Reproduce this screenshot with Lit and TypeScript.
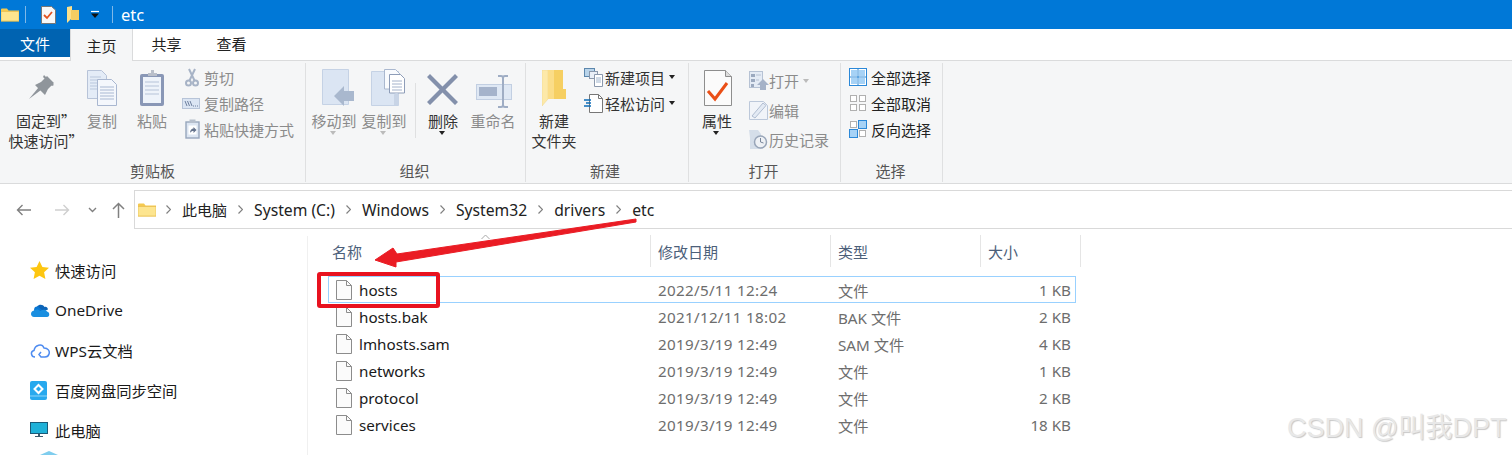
import { LitElement, html, css, svg } from "lit";
import { customElement } from "lit/decorators.js";

const pageIcon = html`<svg class="file-ico" width="18" height="22" viewBox="0 0 18 22"><path d="M1.500 1.500h10l5 5v14h-15z" fill="#fbfbfb" stroke="#8c8c8c"/><path d="M11.500 1.500v5h5" fill="none" stroke="#8c8c8c"/></svg>`;

const I = {
  folderSmall: svg`<path d="M0 2.500q0-1 1-1h5l1.500 2H18v11H0z" fill="#f5c94f"/><rect x="0" y="4.500" width="18" height="9.500" fill="#fde58f" stroke="#e5b84a" stroke-width=".6"/>`,
  pin: svg`<g fill="#8f959b"><path d="M0 25l9.500-11.500 2.500 2.500z"/><path d="M6 11l6-3 6-6 7 7-6 6-3 6z"/><path d="M15 1l10 10-2 1-9-9z"/></g>`,
  copy: svg`<path d="M.5.500h14l5 5v23H.5z" fill="#e4ecf7" stroke="#b7c3d8"/><g stroke="#b9c7dc"><path d="M3 7h11M3 10h11M3 13h8M3 16h8M3 19h8"/></g><path d="M10.500 9.500h14l5 5v21h-19z" fill="#f4f7fc" stroke="#a9b7d0"/><g stroke="#a9b8d2"><path d="M13 17h14M13 20h14M13 23h14M13 26h14M13 29h14"/></g>`,
  paste: svg`<rect x="1" y="5" width="24" height="32" rx="2" fill="#8997b6"/><rect x="4" y="8" width="18" height="26" fill="#eef3fa"/><g stroke="#b6c3d8"><path d="M6 13h14M6 17h14M6 21h14M6 25h14"/></g><path d="M9 7V4h3V1h3v3h3v3z" fill="#b9bfca"/>`,
  scissors: svg`<g fill="none" stroke="#a7b3c6" stroke-width="2"><circle cx="3.500" cy="15" r="2.500"/><circle cx="10.500" cy="15" r="2.500"/><path d="M4.500 12.500L10 1M9.500 12.500L4 1"/></g>`,
  path: svg`<rect x=".5" y=".5" width="17" height="10" fill="#dbe5f3" stroke="#b7c4d8"/><path d="M3 3l2 5M5.500 3l2 5M8 3l2 5" stroke="#6d7f9e"/><path d="M11 8h1M13 8h1M15 8h1" stroke="#6d7f9e"/>`,
  shortcut: svg`<rect x="1" y="3" width="13" height="16" fill="#dde6f2" stroke="#97a6bc" stroke-width="1.400"/><rect x="4.500" y=".5" width="6" height="3.500" fill="#b6bfcc"/><rect x="3.500" y="6.500" width="8" height="9" fill="#fff"/><path d="M5 14c0-3 1.500-4.500 3.500-4.500V8l3 3-3 3v-2c-1.500 0-2.500.5-3.500 2z" fill="#65738c"/>`,
  move: svg`<path d="M.5.500h26v35H.5z" fill="#dbe5f3" stroke="#c5d2e5"/><path d="M12 27l10-10v5h10v10H22v5z" fill="#a9b8ce"/>`,
  copyTo: svg`<path d="M.5 2.500h27v34H.5z" fill="#dbe5f3" stroke="#c5d2e5"/><path d="M13.500.500h11l5 5V20H13.500z" fill="#f9fbfe" stroke="#aab8cf"/><path d="M18.500 5.500h11l4 4V24h-15z" fill="#fff" stroke="#8e9db8"/><g stroke="#a4b2ca"><path d="M21 12h10M21 15h10M21 18h10M21 21h10"/></g><path d="M23 36V26q0-2 2.500-2t2.500 2v10z" fill="#c8d4e6"/>`,
  del: svg`<path d="M3 0l12.500 12.500L28 0l3 3-12.500 12.500L31 28l-3 3-12.500-12.500L3 31l-3-3 12.500-12.500L0 3z" fill="#8390ab"/>`,
  rename: svg`<rect x=".5" y="9.500" width="35" height="15" fill="#dfe8f4" stroke="#c2cfe2"/><rect x="3" y="12" width="18" height="9" fill="#a5b3cb"/><g fill="none" stroke="#9fadc4" stroke-width="2"><path d="M22 1h3q2 0 2 2v27q0 2-2 2h-3M32 1h-3q-2 0-2 2v27q0 2 2 2h3"/></g>`,
  newFolder: svg`<path d="M0 0h6v29l-6 7z" fill="#fde9a9" stroke="#eed48a" stroke-width=".5"/><path d="M6 0h15v19h3v10H6z" fill="#f6cf62"/><path d="M6 0h6v29H6z" fill="#fbdd88"/>`,
  newItem: svg`<rect x=".5" y=".5" width="10" height="8" fill="#b9d4ea" stroke="#5c87ad"/><rect x="5.500" y="3.500" width="8" height="7" fill="#e9eff7" stroke="#8a98ac"/><path d="M10.500 6.500h8v12h-8z" fill="#fff" stroke="#8a98ac"/><path d="M12 10h5M12 12h5M12 14h5" stroke="#9fb4cd"/>`,
  easy: svg`<path d="M5.500 1.500h9l4 4v14h-13z" fill="#fff" stroke="#777"/><path d="M14.500 1.500v4h4" fill="none" stroke="#777"/><path d="M0 7h7M2 10h5M0 13h7" stroke="#0c6cb8" stroke-width="1.300"/>`,
  prop: svg`<path d="M.5.500h21l6 6v29H.5z" fill="#fbfbfb" stroke="#8e8e8e"/><path d="M21.500.500v6h6" fill="#ddd" stroke="#8e8e8e"/><path d="M4 21l7 8 12-16" fill="none" stroke="#ea4f17" stroke-width="3"/>`,
  open: svg`<rect x=".5" y=".5" width="13" height="16" fill="#e4ebf5" stroke="#b6c2d4"/><g fill="#9ba9bf"><rect x="2" y="3" width="4" height="3"/><rect x="2" y="8" width="4" height="3"/><rect x="2" y="13" width="3" height="3"/></g><path d="M7 4h5M7 9h3" stroke="#b6c2d4"/><path d="M14 8l6 6h-3v5h-6v-5H8z" fill="#a5b2c8"/>`,
  edit: svg`<path d="M.5 1.500h14l4 4v14H.5z" fill="#f1f4f9" stroke="#bcc8da"/><path d="M3 16L14 3l3 2.500L6 18z" fill="#e3eaf4" stroke="#b0bdd1"/>`,
  history: svg`<path d="M0 0h9l3 4v12H2z" fill="#d5dee9"/><path d="M1 0v19H14V14z" fill="#d5dee9"/><circle cx="11.500" cy="12" r="6" fill="#eef1f5" stroke="#98a5b8" stroke-width="1.500"/><path d="M11.500 8v4l3 1" fill="none" stroke="#7a879b"/>`,
  sel: svg`<rect x=".5" y=".5" width="17" height="17" fill="#fff" stroke="#2b88d8"/><g fill="#a6d2f6"><rect x="2" y="2" width="6" height="6"/><rect x="10" y="2" width="6" height="6"/><rect x="2" y="10" width="6" height="6"/><rect x="10" y="10" width="6" height="6"/></g><path d="M9 0v18M0 9h18" stroke="#2b88d8"/>`,
  none: svg`<g fill="#fff" stroke="#b0b0b0"><rect x="1.500" y="1.500" width="6" height="6"/><rect x="10.500" y="1.500" width="6" height="6"/><rect x="1.500" y="10.500" width="6" height="6"/><rect x="10.500" y="10.500" width="6" height="6"/></g>`,
  inv: svg`<g fill="#fff" stroke="#b0b0b0"><rect x="1.500" y="1.500" width="6" height="6"/><rect x="10.500" y="10.500" width="6" height="6"/></g><g fill="#a6d2f6" stroke="#2b88d8"><rect x="9.500" y=".5" width="8" height="8"/><rect x=".5" y="9.500" width="8" height="8"/></g>`,
};

const icon = (w: number, h: number, body: unknown) =>
  html`<svg width=${w} height=${h} viewBox="0 0 ${w} ${h}">${body}</svg>`;

const big = (cls: string, w: number, h: number, body: unknown, lines: string[], state = "", caret = false) => html`
  <div class="big ${cls} ${state}">
    <div class="big-ico">${icon(w, h, body)}</div>
    ${lines.map((l) => html`<div class="big-txt">${l}</div>`)}
    ${caret ? html`<i class="caret"></i>` : ""}
  </div>`;

const small = (w: number, h: number, body: unknown, text: string, state = "", caret = false) => html`
  <div class="small ${state}">
    <span class="small-ico">${icon(w, h, body)}</span><span>${text}</span>${caret ? html`<i class="caret"></i>` : ""}
  </div>`;

const rows = [
  ["hosts", "2022/5/11 12:24", "文件", "1 KB"],
  ["hosts.bak", "2021/12/11 18:02", "BAK 文件", "2 KB"],
  ["lmhosts.sam", "2019/3/19 12:49", "SAM 文件", "4 KB"],
  ["networks", "2019/3/19 12:49", "文件", "1 KB"],
  ["protocol", "2019/3/19 12:49", "文件", "2 KB"],
  ["services", "2019/3/19 12:49", "文件", "18 KB"],
];

const crumbs = ["此电脑", "System (C:)", "Windows", "System32", "drivers", "etc"];

@customElement("app-root")
export class AppRoot extends LitElement {
  static styles = css`
    :host {
      display: block;
      width: 1512px;
      height: 455px;
      overflow: hidden;
      position: relative;
      background: #fff;
      font-family: "Noto Sans", "Noto Sans CJK SC", sans-serif;
      font-size: 15px;
      color: #222;
    }
    svg { display: block; }
    .root-flex { display: flex; flex-direction: column; height: 455px; }
    .title {
      height: 29px;
      background: #0078d7;
      display: flex;
      align-items: center;
      color: #fff;
      font-size: 16.5px;
      flex: none;
    }
    .t-folder { margin-left: 1px; }
    .t-sep { width: 1px; height: 17px; background: #7fb8e8; }
    .t-folder + .t-sep { margin-left: 6px; }
    .t-a { margin-left: 15px; }
    .t-b { margin-left: 11px; }
    .t-c { margin: 0 11px 0 10px; }
    .t-text { margin-left: 8px; }
    .tabs {
      height: 32px;
      flex: none;
      display: flex;
      align-items: flex-start;
      border-bottom: 1px solid #dadbdc;
      box-sizing: border-box;
    }
    .tab {
      width: 65px;
      height: 28px;
      display: flex;
      align-items: center;
      justify-content: center;
      font-family: "Noto Sans CJK SC", sans-serif;
    }
    .tab.file { width: 70px; background: #0063b1; color: #fff; }
    .tab.active {
      width: 63px;
      height: 32px;
      margin-right: 1px;
      box-sizing: border-box;
      background: #f5f6f7;
      border: 1px solid #dadbdc;
      border-width: 0 1px;
    }
    .ribbon {
      height: 123px;
      flex: none;
      background: #f5f6f7;
      border-bottom: 1px solid #dadbdc;
      display: flex;
      box-sizing: border-box;
      font-family: "Noto Sans CJK SC", sans-serif;
    }
    .group {
      margin: 2px 0 1px;
      border-right: 1px solid #dfe0e1;
      display: flex;
      flex-direction: column;
      box-sizing: border-box;
    }
    .g1 { width: 306px; }
    .g2 { width: 220px; }
    .g3 { width: 163px; }
    .g4 { width: 152px; }
    .g5 { width: 102px; }
    .g-body { flex: 1; display: flex; min-height: 0; }
    .g-label {
      height: 20px;
      line-height: 20px;
      text-align: center;
      margin-bottom: 1px;
      color: #555;
    }
    .g2 .g-label { padding-right: 2px; }
    .g3 .g-label { padding-right: 4px; }
    .g4 .g-label { padding-right: 2px; }
    .g5 .g-label { padding-right: 2px; }
    .big { display: flex; flex-direction: column; align-items: center; flex: none; position: relative; }
    .big-ico {
      height: 48px;
      box-sizing: border-box;
      padding-bottom: 5px;
      display: flex;
      align-items: flex-end;
      justify-content: center;
    }
    .big-txt { line-height: 20px; height: 20px; white-space: nowrap; color: #333; }
    .dis .big-txt, .small.dis { color: #8b8b8b; }
    .b-pin { width: 92px; }
    .b-pin .big-ico { padding: 0 8px 11px 0; }
    .b-copy { width: 36px; margin-left: -8px; }
    .b-paste { width: 50px; margin-left: 7px; }
    .col { display: flex; flex-direction: column; padding-top: 1px; }
    .c1 { margin-left: 8px; }
    .small { height: 26px; display: flex; align-items: center; white-space: nowrap; color: #333; }
    .small-ico { width: 21px; flex: none; display: flex; align-items: center; }
    .c1 .small-ico { width: 19px; }
    .c1 .small:nth-child(2) .small-ico svg { margin-left: -3px; }
    .b-move { width: 50px; margin-left: 3px; }
    .b-move .big-ico, .b-copyto .big-ico { padding-left: 8px; }
    .b-copyto { width: 50px; }
    .v-sep { width: 1px; height: 55px; background: #dfe0e1; margin: 20px 0 0 6px; }
    .b-del { width: 54px; }
    .b-ren { width: 46px; }
    .b-ren .big-ico { padding: 0 0 2px 2px; }
    .b-newf { width: 56px; }
    .b-prop { width: 56px; }
    .b-prop .big-ico { padding-left: 1px; }
    .c3 { margin-left: 2px; }
    .c3 .caret { margin-left: 4px; border-top-color: #222; }
    .c4 { padding-top: 3px; margin-left: 4px; }
    .c4 .small { height: 29.5px; }
    .c4 .small-ico { width: 20px; }
    .c5 { margin-left: 8px; }
    .c5 .small { color: #222; }
    .c5 .small-ico { width: 22px; }
    .caret {
      display: inline-block;
      width: 0;
      height: 0;
      border: 3.500px solid transparent;
      border-bottom: none;
      border-top: 4px solid #222;
    }
    .big .caret { position: absolute; top: 68px; left: 50%; margin-left: -4px; }
    .dis .caret, .small.dis .caret { border-top-color: #bbb; }
    .c4 .dis .caret { margin-left: 4px; }
    .nav {
      margin-top: 6px;
      height: 39px;
      flex: none;
      display: flex;
      align-items: center;
    }
    .nav-btns { width: 134px; display: flex; align-items: center; flex: none; }
    .n1 { margin-left: 16px; }
    .n2 { margin-left: 24px; }
    .n3 { margin-left: 18px; }
    .n4 { margin-left: 15px; }
    .addr {
      flex: 1;
      height: 39px;
      box-sizing: border-box;
      border: 1px solid #d9d9d9;
      border-right: none;
      display: flex;
      align-items: center;
      padding-left: 3px;
      font-size: 15.700px;
      color: #222;
    }
    .crumb { display: flex; align-items: center; white-space: nowrap; }
    .crumb.cjk { font-size: 15px; }
    .chev { margin: 0 11px; flex: none; }
    .a-folder { margin-right: -1px; }
    .main { display: flex; flex: 1; min-height: 0; }
    .side {
      width: 308px;
      margin-top: 7px;
      box-sizing: border-box;
      border-right: 1px solid #f0f0f0;
      padding: 14px 0 0 30px;
      flex: none;
      overflow: hidden;
    }
    .s-item { height: 40px; display: flex; align-items: center; color: #1a1a1a; white-space: nowrap; font-size: 15.300px; }
    .s-item.cut { align-items: flex-start; }
    .s-ico { width: 25px; flex: none; }
    .list { flex: 1; padding: 6px 0 0 15px; }
    .head { display: flex; height: 32px; align-items: center; color: #4c607a; }
    .h {
      height: 32px;
      box-sizing: border-box;
      border-right: 1px solid #e5e5e5;
      display: flex;
      align-items: center;
      padding-left: 7px;
      flex: none;
    }
    .h1 { width: 328px; padding-left: 9px; position: relative; }
    .h2 { width: 180px; }
    .h3 { width: 150px; }
    .h4 { width: 100px; }
    .sort { position: absolute; left: 158px; top: -1px; }
    .rows { margin: 9px 0 0 5px; width: 748px; }
    .row {
      height: 27px;
      box-sizing: border-box;
      display: grid;
      grid-template-columns: 30px 299px 180px 1fr auto;
      align-items: center;
      border: 1px solid transparent;
      color: #6d6d6d;
      white-space: nowrap;
      font-size: 15.200px;
    }
    .row.sel { border-color: #99d1ff; }
    .name { color: #1a1a1a; }
    .date { letter-spacing: .3px; }
    .file-ico { margin-left: 6px; }
    .size { text-align: right; padding-right: 4px; }
    .anno { position: absolute; left: 0; top: 0; pointer-events: none; }
    .wm {
      position: absolute;
      left: 1287px;
      top: 410px;
      font: 27px/36px "Liberation Sans", "Noto Sans CJK SC", sans-serif;
      color: #e8e8e8;
      text-shadow: 1px 1px 1px #c8c8c8;
      white-space: nowrap;
    }
  `;

  render() {
    return html`<div class="root-flex">
      <div class="title">
        <span class="t-folder">${icon(18, 15, I.folderSmall)}</span>
        <span class="t-sep"></span>
        <span class="t-a">${icon(15, 18, svg`<path d="M.5.500h10l4 3.500v13.500H.5z" fill="#f8f8f8" stroke="#777"/><path d="M3 9l3 3 5-6" fill="none" stroke="#e3521f" stroke-width="1.800"/>`)}</span>
        <span class="t-b">${icon(12, 17, svg`<path d="M0 1l5-1v4h7v9H4l-4 4z" fill="#fbe08b"/><path d="M4 4h8v10H4z" fill="#f4cd63"/>`)}</span>
        <span class="t-c">${icon(12, 9, svg`<path d="M2 1.500h8" stroke="#fff" stroke-width="1.200"/><path d="M2 3.500h8L6 8z" fill="#111"/>`)}</span>
        <span class="t-sep"></span>
        <span class="t-text">etc</span>
      </div>
      <div class="tabs">
        <div class="tab file">文件</div>
        <div class="tab active">主页</div>
        <div class="tab">共享</div>
        <div class="tab">查看</div>
      </div>
      <div class="ribbon">
        <div class="group g1">
          <div class="g-body">
            ${big("b-pin", 26, 26, I.pin, ["固定到”", "快速访问”"])}
            ${big("b-copy", 30, 36, I.copy, ["复制"], "dis")}
            ${big("b-paste", 26, 37, I.paste, ["粘贴"], "dis")}
            <div class="col c1">
              ${small(15, 19, I.scissors, "剪切", "dis")}
              ${small(18, 11, I.path, "复制路径", "dis")}
              ${small(15, 20, I.shortcut, "粘贴快捷方式", "dis")}
            </div>
          </div>
          <div class="g-label">剪贴板</div>
        </div>
        <div class="group g2">
          <div class="g-body">
            ${big("b-move", 32, 37, I.move, ["移动到"], "dis", true)}
            ${big("b-copyto", 35, 37, I.copyTo, ["复制到"], "dis", true)}
            <div class="v-sep"></div>
            ${big("b-del", 32, 32, I.del, ["删除"], "", true)}
            ${big("b-ren", 36, 34, I.rename, ["重命名"], "dis")}
          </div>
          <div class="g-label">组织</div>
        </div>
        <div class="group g3">
          <div class="g-body">
            ${big("b-newf", 25, 36, I.newFolder, ["新建", "文件夹"])}
            <div class="col c3">
              ${small(19, 19, I.newItem, "新建项目", "", true)}
              ${small(19, 20, I.easy, "轻松访问", "", true)}
            </div>
          </div>
          <div class="g-label">新建</div>
        </div>
        <div class="group g4">
          <div class="g-body">
            ${big("b-prop", 28, 36, I.prop, ["属性"], "", true)}
            <div class="col c4">
              ${small(20, 20, I.open, "打开", "dis", true)}
              ${small(19, 20, I.edit, "编辑", "dis")}
              ${small(20, 20, I.history, "历史记录", "dis")}
            </div>
          </div>
          <div class="g-label">打开</div>
        </div>
        <div class="group g5">
          <div class="g-body">
            <div class="col c5">
              ${small(18, 18, I.sel, "全部选择")}
              ${small(18, 18, I.none, "全部取消")}
              ${small(18, 18, I.inv, "反向选择")}
            </div>
          </div>
          <div class="g-label">选择</div>
        </div>
      </div>
      <div class="nav">
        <div class="nav-btns">
          <span class="n1">${icon(15, 12, svg`<path d="M15 6H1.500M6.500 1l-5 5 5 5" fill="none" stroke="#808080" stroke-width="1.400"/>`)}</span>
          <span class="n2">${icon(15, 12, svg`<path d="M0 6h13.500M8.500 1l5 5-5 5" fill="none" stroke="#cfcfcf" stroke-width="1.400"/>`)}</span>
          <span class="n3">${icon(9, 6, svg`<path d="M1 1l3.500 3.500L8 1" fill="none" stroke="#808080" stroke-width="1.400"/>`)}</span>
          <span class="n4">${icon(13, 16, svg`<path d="M6.500 16V1.500M1 7l5.500-5.500L12 7" fill="none" stroke="#808080" stroke-width="1.500"/>`)}</span>
        </div>
        <div class="addr">
          <span class="a-folder">${icon(18, 15, I.folderSmall)}</span>
          ${crumbs.map((c, i) => html`<span class="crumb ${i === 0 ? "cjk" : ""}"><svg class="chev" width="5" height="9" viewBox="0 0 5 9"><path d="M.5.500l4 4-4 4" fill="none" stroke="#808080" stroke-width="1.200"/></svg>${c}</span>`)}
        </div>
      </div>
      <div class="main">
        <div class="side">
          <div class="s-item"><span class="s-ico">${icon(19, 18, svg`<path d="M9.500 0l2.900 6 6.600.8-4.900 4.500 1.300 6.700-5.900-3.300L3.600 18l1.300-6.700L0 6.800 6.600 6z" fill="#fdc611"/>`)}</span>快速访问</div>
          <div class="s-item"><span class="s-ico">${icon(20, 13, svg`<path d="M7 2.500C9 0 13 0 14.500 3c2-.5 3 .5 3.500 2.500L9 9z" fill="#0c64b8"/><path d="M4 6C4 3 6 2 8 2.500L12 6 5 9z" fill="#0a78d4"/><path d="M4 13C0 13 0 7 4 6.500 6 5 9 5 10 7c3-2 6-1.500 7 .5 3 .5 3 5.500 0 5.500z" fill="#1a8fe0"/>`)}</span>OneDrive</div>
          <div class="s-item"><span class="s-ico">${icon(20, 15, svg`<path d="M5 14C1 14 0 8.500 4 7.500 5 2 12 0 14 5c4 0 6 3 5 6-.5 2-2 3-4 3h-4l-2-2.500L11 9" fill="none" stroke="#4f8cf0" stroke-width="1.500"/>`)}</span>WPS云文档</div>
          <div class="s-item"><span class="s-ico">${icon(17, 19, svg`<rect width="17" height="19" rx="2" fill="#28a9ee"/><path d="M8.500 4l4 4-4 4-4-4z" fill="none" stroke="#fff" stroke-width="2"/><path d="M0 15h17" stroke="#8ed6fa"/>`)}</span>百度网盘同步空间</div>
          <div class="s-item"><span class="s-ico">${icon(18, 16, svg`<rect width="18" height="12" fill="#1fb1d8"/><rect x=".5" y=".5" width="17" height="11" fill="none" stroke="#1a5a78"/><path d="M8 12h2v2h3v1H5v-1h3z" fill="#3d5a6c"/>`)}</span>此电脑</div>
          <div class="s-item cut"><span class="s-ico">${icon(28, 6, svg`<path d="M19 1l9 4H10z" fill="#7fcdee"/>`)}</span></div>
        </div>
        <div class="list">
          <div class="head">
            <div class="h h1">名称<svg class="sort" width="9" height="6" viewBox="0 0 9 6"><path d="M.5 5l4-4 4 4" fill="none" stroke="#a8a8a8"/></svg></div>
            <div class="h h2">修改日期</div>
            <div class="h h3">类型</div>
            <div class="h h4">大小</div>
          </div>
          <div class="rows">
            ${rows.map((r, i) => html`<div class="row ${i === 0 ? "sel" : ""}">
              ${pageIcon}
              <div class="name">${r[0]}</div>
              <div class="date">${r[1]}</div>
              <div>${r[2]}</div>
              <div class="size">${r[3]}</div>
            </div>`)}
          </div>
        </div>
      </div>
      <svg class="anno" width="1512" height="455" viewBox="0 0 1512 455">
        <path d="M636 219L397 254 393 248 375 260 396 267 396 262 636 222z" fill="#ea1c24" stroke="#ea1c24" stroke-linejoin="round"/>
        <rect x="319" y="274" width="119" height="32" rx="1" fill="none" stroke="#e8121f" stroke-width="4"/>
      </svg>
      <div class="wm">CSDN @叫我DPT</div>
    </div>`;
  }
}
